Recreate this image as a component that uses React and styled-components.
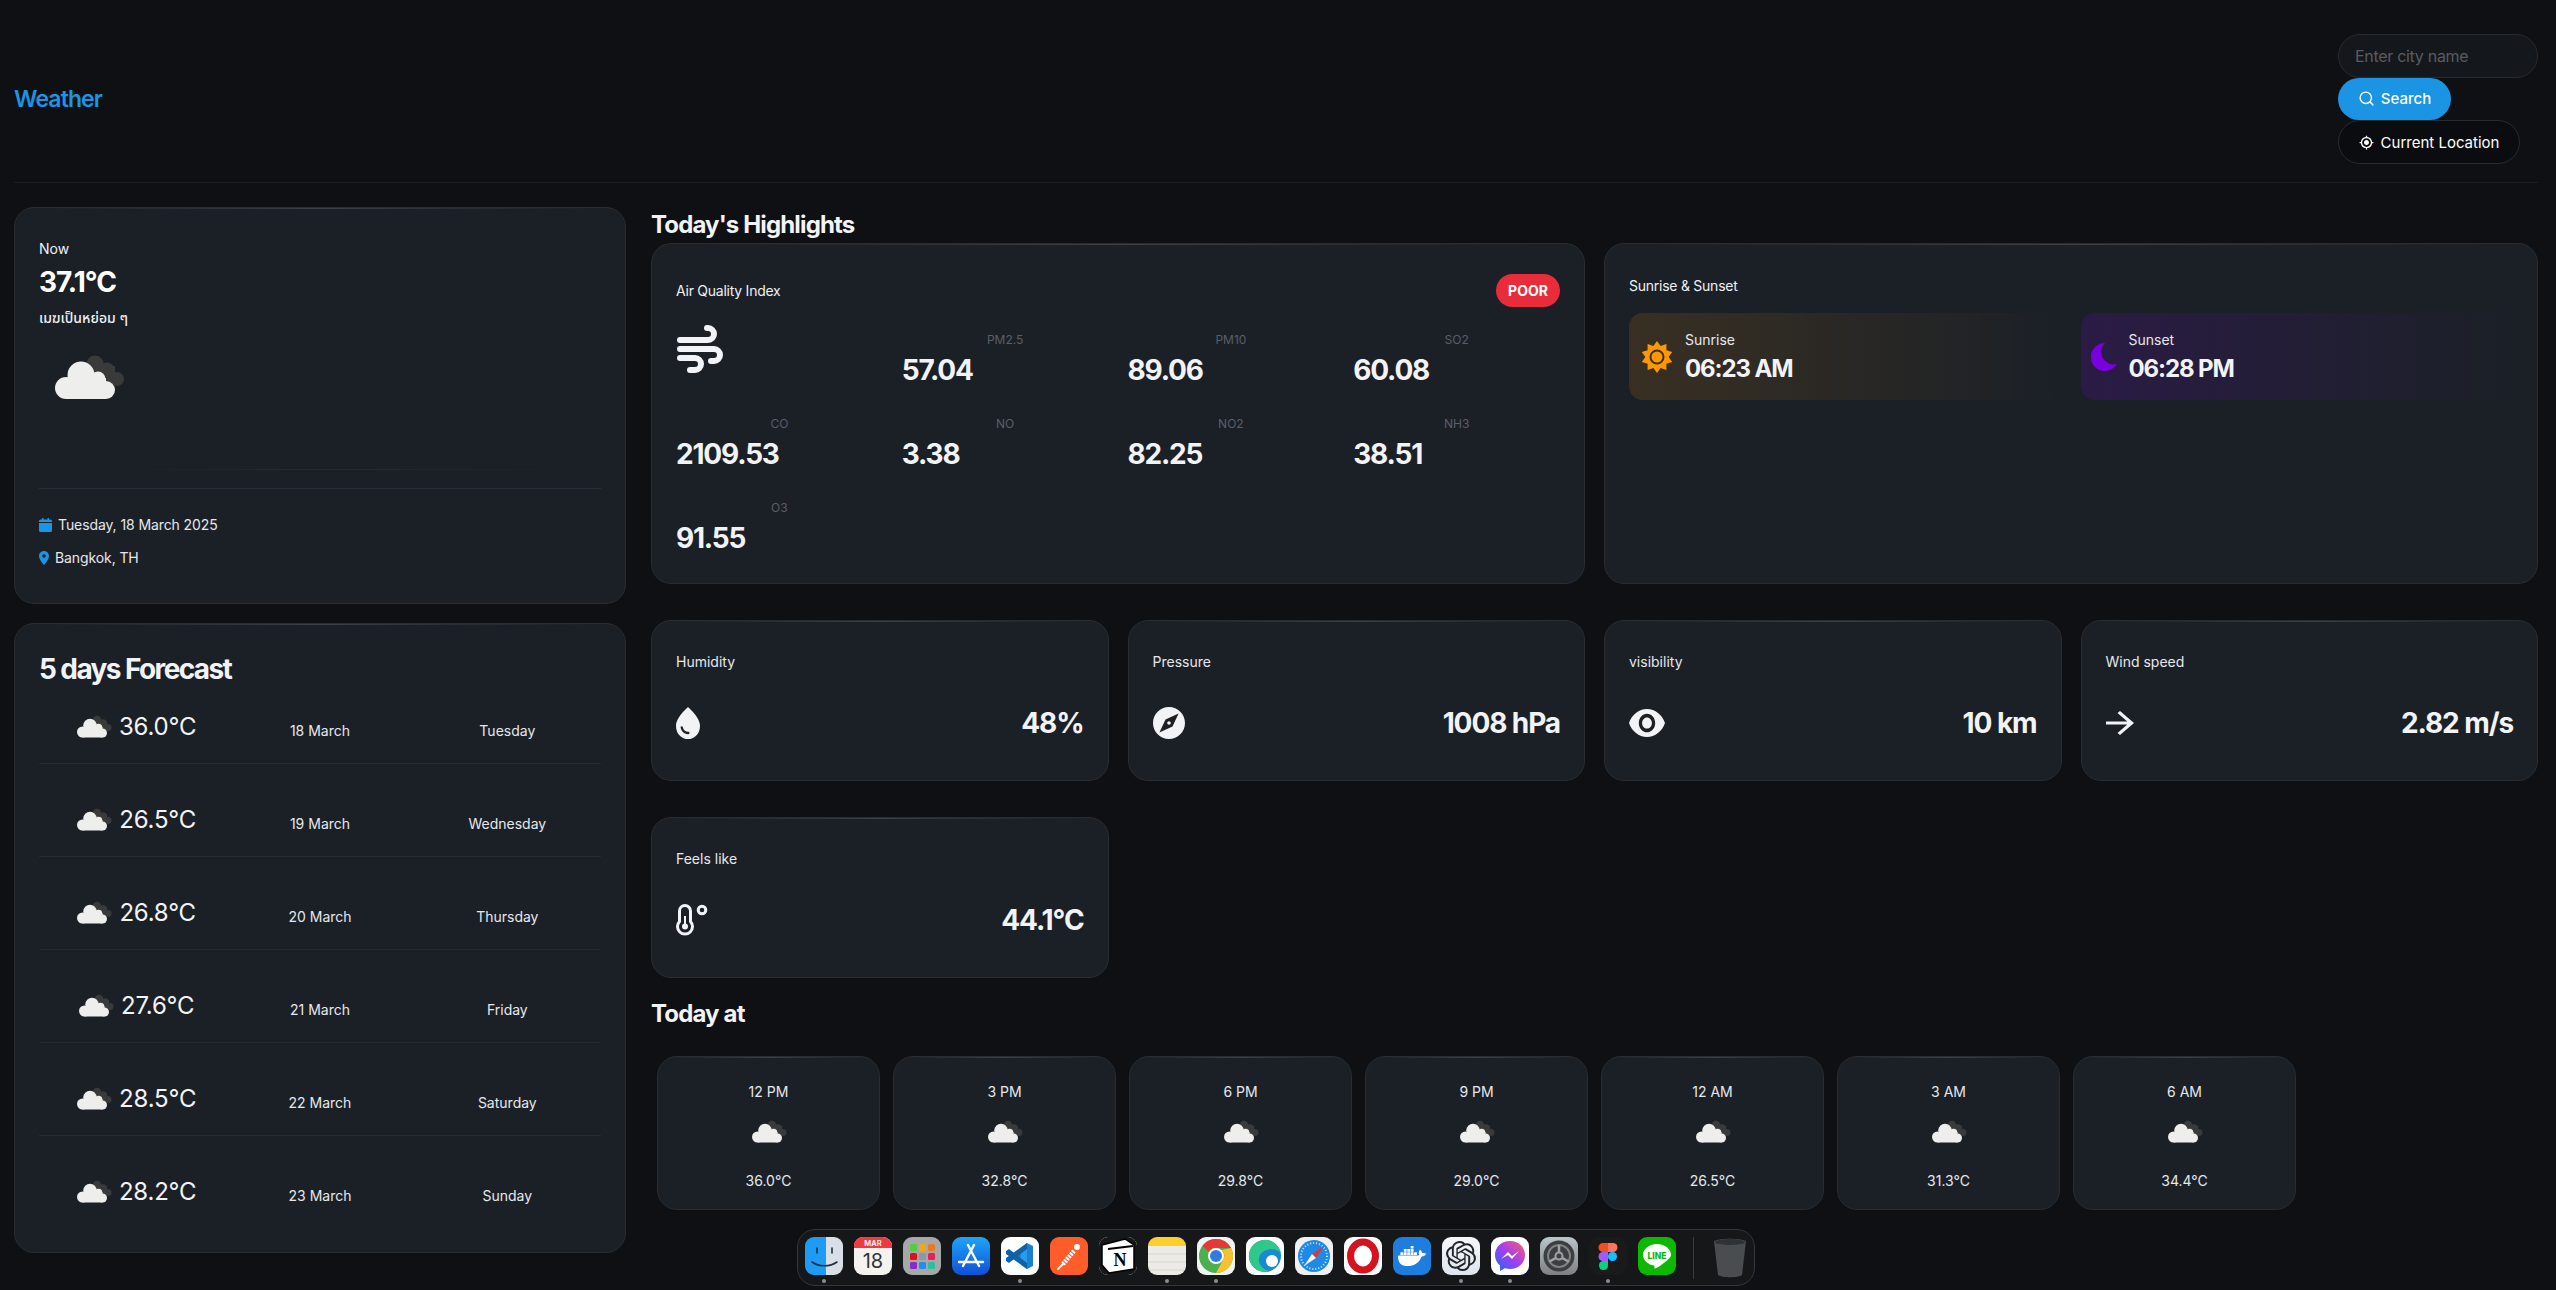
import React from "react";
import styled, { createGlobalStyle } from "styled-components";
import { Search } from "lucide-react";
import { MdWaterDrop, MdExplore, MdVisibility, MdArrowForward, MdLocationOn, MdMyLocation } from "react-icons/md";
import { SiDocker, SiOpenai } from "react-icons/si";

const GlobalStyle = createGlobalStyle`
  html, body { margin: 0; padding: 0; background: #0e1014; }
  body { font-family: Inter, "Noto Sans", sans-serif; color: #eef0f4; overflow: hidden; }
  * { box-sizing: border-box; }
`;

const Page = styled.div`
  width: 2556px;
  height: 1290px;
  padding: 0 18px 0 14px;
  background: #0e1014;
`;

const Header = styled.header`
  height: 183px;
  padding-top: 34px;
  display: flex;
  justify-content: space-between;
  align-items: flex-start;
  border-bottom: 1px solid #1b1e23;
`;

const Logo = styled.div`
  margin-top: 50px;
  font-size: 23px;
  line-height: 30px;
  font-weight: 600;
  letter-spacing: -0.9px;
  color: #1b94e4;
`;

const Actions = styled.div`
  width: 200px;
  display: flex;
  flex-direction: column;
  align-items: flex-start;
`;

const CityInput = styled.input`
  width: 200px;
  height: 44px;
  padding: 0 16px;
  border-radius: 22px;
  border: 1px solid #272b31;
  background: #14171b;
  font: 400 16px Inter, sans-serif;
  letter-spacing: -0.3px;
  color: #fff;
  &::placeholder { color: #5a5c60; }
`;

const SearchButton = styled.button`
  height: 42px;
  width: 113px;
  padding-bottom: 2px;
  border: 0;
  border-radius: 21px;
  background: #1b94e4;
  color: #fff;
  font: 500 15px Inter, sans-serif;
  display: flex;
  align-items: center;
  justify-content: center;
  gap: 6px;
`;

const LocationButton = styled.button`
  height: 44px;
  width: 182px;
  padding-bottom: 1px;
  border: 1px solid #272b31;
  border-radius: 22px;
  background: #0b0c0f;
  color: #fff;
  font: 400 15px Inter, sans-serif;
  display: flex;
  align-items: center;
  justify-content: center;
  gap: 7px;
  svg { width: 15px; height: 15px; }
`;

const Main = styled.main`
  margin-top: 24px;
  display: grid;
  grid-template-columns: 612px 1fr;
  column-gap: 25px;
`;

const LeftColumn = styled.div`
  display: flex;
  flex-direction: column;
  gap: 19px;
`;

const RightColumn = styled.div`
  display: flex;
  flex-direction: column;
`;

const Card = styled.section`
  border: 1px solid #282d34;
  border-radius: ${(p) => p.$radius || 20}px;
  background:
    linear-gradient(90deg, transparent 5%, #3a3f48 50%, transparent 95%) top / 100% 1px no-repeat,
    #1b2027;
`;

const NowCard = styled(Card)`
  height: 397px;
  padding: 30px 24px 0;
`;

const SmallText = styled.div`
  font-size: 14px;
  line-height: 22px;
  color: #eef0f4;
`;

const BigTemp = styled.div`
  margin-top: 4px;
  font-size: 28px;
  line-height: 36px;
  font-weight: 700;
  letter-spacing: -1px;
  color: #fff;
`;

const ThaiText = styled.div`
  margin-top: 8px;
  font-family: Inter, "Noto Sans Thai", "Noto Sans", sans-serif;
  font-size: 14px;
  line-height: 20px;
  font-weight: 500;
`;

const FadeLine = styled.div`
  margin-top: 41px;
  height: 1px;
  background: linear-gradient(90deg, transparent 15%, #262b32 50%, transparent 95%);
`;

const Divider = styled.div`
  margin-top: 18px;
  height: 1px;
  background: #2a2f37;
`;

const MetaRow = styled.div`
  margin-top: ${(p) => p.$top}px;
  display: flex;
  align-items: center;
  gap: ${(p) => p.$gap}px;
  font-size: 14px;
  line-height: 22px;
  letter-spacing: -0.1px;
  color: #e6e8ec;
`;

const ForecastCard = styled(Card)`
  height: 630px;
  padding: 28px 24px 0;
`;

const CardTitle = styled.h2`
  margin: 0;
  font-size: 28px;
  line-height: 34px;
  font-weight: 700;
  letter-spacing: -1.6px;
  color: #f2f3f6;
`;

const ForecastList = styled.div`
  display: flex;
  flex-direction: column;
  gap: 15px;
`;

const ForecastRow = styled.div`
  height: 78px;
  padding-top: 10px;
  display: grid;
  grid-template-columns: repeat(3, 1fr);
  align-items: center;
  justify-items: center;
  font-size: 14px;
  color: #e6e8ec;
  border-bottom: 1px solid ${(p) => (p.$last ? "transparent" : "#262b32")};
`;

const ForecastTemp = styled.div`
  display: flex;
  align-items: center;
  margin-bottom: 6px;
  font-size: 24px;
  letter-spacing: -0.2px;
  color: #f2f3f6;
`;

const ForecastCell = styled.div`
  padding-top: 1px;
`;

const CloudBox = styled.svg`
  display: block;
  width: ${(p) => p.$size}px;
  height: ${(p) => p.$size}px;
  flex: none;
`;

const SectionTitle = styled.h2`
  margin: ${(p) => p.$top || 0}px 0 0;
  height: ${(p) => p.$height}px;
  font-size: 24px;
  line-height: 36px;
  font-weight: 700;
  letter-spacing: -0.85px;
  color: #f2f3f6;
`;

const TopGrid = styled.div`
  display: grid;
  grid-template-columns: repeat(2, 1fr);
  column-gap: 19px;
`;

const AirCard = styled(Card)`
  height: 341px;
  padding: 30px 24px 0 24px;
`;

const SunCard = styled(Card)`
  height: 341px;
  padding: 30px 24px 0;
`;

const CardHead = styled.div`
  display: flex;
  justify-content: space-between;
  align-items: center;
  height: ${(p) => p.$height}px;
  font-size: 14px;
  letter-spacing: -0.25px;
  color: #eef0f4;
`;

const PoorBadge = styled.span`
  height: 33px;
  width: 64px;
  border-radius: 17px;
  background: #e92c3a;
  color: #fff;
  font-size: 14px;
  font-weight: 700;
  letter-spacing: 0;
  display: flex;
  align-items: center;
  justify-content: center;
`;

const AirGrid = styled.div`
  margin-top: 18px;
  display: grid;
  grid-template-columns: repeat(4, 1fr);
  column-gap: 19px;
  row-gap: 21px;
`;

const AirItem = styled.div`
  height: 63px;
  padding-top: 6px;
`;

const AirLabel = styled.div`
  font-size: 12px;
  line-height: 18px;
  text-align: center;
  color: #5a5e68;
`;

const AirValue = styled.div`
  margin-top: 3px;
  font-size: 28px;
  line-height: 36px;
  font-weight: 700;
  letter-spacing: -1.2px;
  color: #f2f3f6;
`;

const SunRow = styled.div`
  margin-top: 17px;
  display: grid;
  grid-template-columns: repeat(2, 1fr);
  column-gap: 19px;
`;

const SunPanel = styled.div`
  height: 87px;
  padding-left: ${(p) => p.$pad}px;
  border-radius: 14px;
  display: flex;
  align-items: center;
  gap: 12px;
  background: linear-gradient(90deg, ${(p) => p.$tint}, transparent);
`;

const SunLabel = styled.div`
  font-size: 14px;
  line-height: 20px;
  color: #e6e8ec;
`;

const SunTime = styled.div`
  margin-top: 4px;
  font-size: 24px;
  line-height: 30px;
  font-weight: 700;
  letter-spacing: -1.1px;
  color: #f2f3f6;
`;

const StatGrid = styled.div`
  margin-top: 36px;
  display: grid;
  grid-template-columns: repeat(4, 1fr);
  column-gap: 19px;
  row-gap: 36px;
`;

const StatCard = styled(Card)`
  height: 161px;
  padding: 30px 24px 0 24px;
`;

const StatLabel = styled.div`
  font-size: 14px;
  line-height: 22px;
  color: #e6e8ec;
`;

const StatRow = styled.div`
  margin-top: 34px;
  height: 32px;
  display: flex;
  align-items: center;
  justify-content: space-between;
`;

const StatGlyph = styled.span`
  display: block;
  color: ${(p) => p.$color || "#f2f3f6"};
  svg {
    display: block;
    width: ${(p) => p.$w}px;
    height: ${(p) => p.$h || 32}px;
  }
`;

const StatValue = styled.div`
  font-size: 28px;
  font-weight: 700;
  letter-spacing: -1.1px;
  color: #f2f3f6;
`;

const HourRow = styled.div`
  padding-left: 6px;
  display: flex;
  gap: 13px;
`;

const HourCard = styled(Card)`
  width: 223px;
  height: 154px;
  padding-top: 24px;
  display: flex;
  flex-direction: column;
  align-items: center;
  font-size: 14px;
  line-height: 22px;
  color: #e6e8ec;
`;

const HourIcon = styled.div`
  margin-top: 4px;
`;

const HourTemp = styled.div`
  margin-top: 13px;
`;

const Dock = styled.nav`
  position: fixed;
  left: 797px;
  top: 1229px;
  width: 958px;
  height: 57px;
  padding: 7px 0 0 7px;
  display: flex;
  gap: 11px;
  border: 1px solid #34363a;
  border-radius: 18px;
  background: #161719;
`;

const DockSlot = styled.div`
  width: 38px;
  display: flex;
  flex-direction: column;
  align-items: center;
  gap: 4px;
`;

const DockTile = styled.div`
  width: 38px;
  height: 38px;
  border-radius: 9px;
  overflow: hidden;
  display: flex;
  align-items: center;
  justify-content: center;
  background: ${(p) => p.$bg};
  color: ${(p) => p.$fg || "#fff"};
  svg { display: block; }
`;

const DockDot = styled.span`
  width: 4px;
  height: 4px;
  border-radius: 50%;
  background: ${(p) => (p.$on ? "#8a8c90" : "transparent")};
`;

const DockSep = styled.div`
  width: 1px;
  height: 42px;
  margin: 0 7px 0 6px;
  background: #3a3c40;
`;

const Cloud = ({ size }) => (
  <CloudBox $size={size} viewBox="0 0 100 100">
    <g fill="#3a3a3a">
      <circle cx="56" cy="36" r="8.5" />
      <circle cx="68" cy="42" r="7.5" />
      <circle cx="78" cy="51" r="7" />
      <rect x="56" y="38" width="20" height="18" />
    </g>
    <g fill="#eeeeec">
      <circle cx="27" cy="60" r="11" />
      <circle cx="42" cy="47" r="13.5" />
      <circle cx="59" cy="51" r="7.5" />
      <circle cx="67" cy="62" r="9" />
      <rect x="27" y="50" width="40" height="21" />
    </g>
  </CloudBox>
);

const starPoints = Array.from({ length: 20 }, (_, i) => {
  const r = i % 2 ? 11.6 : 16;
  const a = (Math.PI * i) / 10 - Math.PI / 2;
  return `${16 + r * Math.cos(a)},${16 + r * Math.sin(a)}`;
}).join(" ");

const SunIcon = () => (
  <svg width="32" height="32" viewBox="0 0 32 32">
    <polygon points={starPoints} fill="#ff9800" />
    <circle cx="16" cy="16" r="6.5" fill="none" stroke="#33302b" strokeWidth="2" />
  </svg>
);

const MoonIcon = () => (
  <svg width="26" height="28" viewBox="0 0 26 28">
    <path d="M14 0A14 14 0 1 0 26 21 12.500 12.500 0 0 1 14 0Z" fill="#7a00e0" />
  </svg>
);

const AirIcon = () => (
  <svg width="48" height="48" viewBox="0 0 48 48" fill="none" stroke="#f2f3f6" strokeWidth="6" strokeLinecap="round">
    <path d="M4 15H32a6 6 0 0 0 0-12h-1" />
    <path d="M4 24H38a6 6 0 0 1 0 12h-3" />
    <path d="M4 33H19a6 6 0 0 1 0 12h-5" />
  </svg>
);

const ThermoIcon = () => (
  <svg viewBox="0 0 32 32" fill="none" stroke="#f2f3f6" strokeWidth="3">
    <path d="M3.500 7a5.500 5.500 0 0 1 11 0v10.500a7.500 7.500 0 1 1-11 0Z" />
    <circle cx="9" cy="22.500" r="3" fill="#f2f3f6" stroke="none" />
    <path d="M9 12v10" strokeWidth="2" />
    <circle cx="26" cy="6" r="3.800" />
  </svg>
);

const CalendarIcon = () => (
  <svg width="13" height="14" viewBox="0 0 13 14">
    <path d="M1.500 1.500H3V0h1.500v1.500h4V0H10v1.500h1.500A1.500 1.500 0 0 1 13 3v1H0V3a1.500 1.500 0 0 1 1.500-1.500Z" fill="#1b94e4" />
    <path d="M0 5h13v7.500a1.500 1.500 0 0 1-1.500 1.500h-10A1.500 1.500 0 0 1 0 12.500Z" fill="#1b94e4" />
  </svg>
);

const dockIcons = [
  {
    key: "finder", bg: "linear-gradient(90deg,#1e9cf5 0 55%,#d8dfe6 55%)", dot: true, art: (
      <svg width="38" height="38" viewBox="0 0 38 38" fill="none" stroke="#23313f" strokeWidth="1.600" strokeLinecap="round">
        <path d="M12 11v5M27 11v5M7 25c7 5 18 5 25 0" />
      </svg>
    ),
  },
  {
    key: "calendar", bg: "#f5f3f0", art: (
      <svg width="38" height="38" viewBox="0 0 38 38">
        <rect width="38" height="11" fill="#ee3b3f" />
        <text x="19" y="8.500" textAnchor="middle" fontSize="7.500" fontWeight="600" fill="#fff" fontFamily="Inter">MAR</text>
        <text x="19" y="31" textAnchor="middle" fontSize="20" fill="#333" fontFamily="Inter">18</text>
      </svg>
    ),
  },
  {
    key: "launchpad", bg: "#a6a7a9", art: (
      <svg width="38" height="38" viewBox="0 0 38 38">
        {["#4fd13f", "#f2a71b", "#ec7a1c", "#d9141f", "#8f979d", "#e81f5a", "#8a2bc4", "#1e8ff0", "#29c0a0"].map((c, i) => (
          <rect key={c} x={7 + (i % 3) * 9} y={7 + Math.floor(i / 3) * 9} width="7" height="7" rx="1.500" fill={c} />
        ))}
      </svg>
    ),
  },
  {
    key: "appstore", bg: "linear-gradient(#1ea5f8,#1150d8)", art: (
      <svg width="38" height="38" viewBox="0 0 38 38" fill="none" stroke="#fff" strokeWidth="2.400" strokeLinecap="round">
        <path d="M22 8 11 29M16 8l11 21M7 25h24" />
      </svg>
    ),
  },
  {
    key: "vscode", bg: "#fff", dot: true, art: (
      <svg width="38" height="38" viewBox="0 0 38 38">
        <path d="M26 6 32 9V29L26 32 12 20Z" fill="#1b80d0" />
        <path d="M26 6V32L20 28V11Z" fill="#2a9cec" />
        <path d="M5 14 8 12 26 26V32L5 17Z" fill="#0f62a8" />
        <path d="M5 24 8 26 26 12V6L5 21Z" fill="#0f62a8" />
      </svg>
    ),
  },
  {
    key: "postman", bg: "#ff5c2b", art: (
      <svg width="38" height="38" viewBox="0 0 38 38" fill="none" stroke="#fff" strokeWidth="2" strokeLinecap="round">
        <path d="M13 27 24 14" strokeWidth="4.500" strokeDasharray="2 1" strokeLinecap="butt" />
        <path d="M8 32 13 27" />
        <circle cx="27" cy="10" r="3" fill="#fff" stroke="none" />
      </svg>
    ),
  },
  {
    key: "notion", bg: "#fff", fg: "#000", art: (
      <svg width="38" height="38" viewBox="0 0 38 38">
        <rect width="38" height="38" fill="#161719" />
        <path d="M3 8 26 2 35 8V32L10 36 3 28Z" fill="#fff" stroke="#000" strokeWidth="1.500" />
        <path d="M9 12 34 9" stroke="#000" strokeWidth="2" />
        <text x="21" y="29" textAnchor="middle" fontSize="18" fontWeight="700" fill="#000" fontFamily="Liberation Serif">N</text>
      </svg>
    ),
  },
  {
    key: "notes", bg: "linear-gradient(#fdcf2c 0 24%,#ecebe6 24%)", dot: true, art: (
      <svg width="38" height="38" viewBox="0 0 38 38" stroke="#d8d6cf" strokeWidth="1">
        <path d="M0 17h38M0 25h38M0 33h38" />
      </svg>
    ),
  },
  {
    key: "chrome", bg: "#f2f2f2", dot: true, art: (
      <svg width="38" height="38" viewBox="0 0 38 38">
        <circle cx="19" cy="19" r="17" fill="#4caf50" />
        <path d="M19 2A17 17 0 0 1 34 11H19A8 8 0 0 0 12 15L5.500 9A17 17 0 0 1 19 2Z" fill="#e53935" />
        <path d="M34 11A17 17 0 0 1 19 36L26 23A8 8 0 0 0 25 13Z" fill="#fbc02d" />
        <circle cx="19" cy="19" r="8" fill="#fff" />
        <circle cx="19" cy="19" r="6" fill="#2f7de1" />
      </svg>
    ),
  },
  {
    key: "edge", bg: "#fff", art: (
      <svg width="38" height="38" viewBox="0 0 38 38">
        <circle cx="19" cy="19" r="16" fill="#1a8ad0" />
        <path d="M3 21A16 16 0 0 1 35 17C34 12 20 9 14 18 11 24 14 32 24 34A16 16 0 0 1 3 21Z" fill="#2fc88a" />
        <circle cx="26" cy="24" r="6" fill="#fff" />
      </svg>
    ),
  },
  {
    key: "safari", bg: "#f0f0f0", art: (
      <svg width="38" height="38" viewBox="0 0 38 38">
        <circle cx="19" cy="19" r="16" fill="#1e8ae6" />
        <circle cx="19" cy="19" r="13" fill="none" stroke="#cfe6fa" strokeWidth="2" strokeDasharray="1 2" />
        <path d="M29 9 21 21 17 17Z" fill="#e8342b" />
        <path d="M9 29 21 21 17 17Z" fill="#f4f4f4" />
      </svg>
    ),
  },
  {
    key: "opera", bg: "#fff", art: (
      <svg width="38" height="38" viewBox="0 0 38 38">
        <ellipse cx="19" cy="19" rx="12.500" ry="14" fill="none" stroke="#d6121f" strokeWidth="7" />
      </svg>
    ),
  },
  { key: "docker", bg: "#1d7ee0", art: <SiDocker size={28} /> },
  { key: "chatgpt", bg: "linear-gradient(#f6f7f9,#dfe5ee)", fg: "#22262b", dot: true, art: <SiOpenai size={30} /> },
  {
    key: "messenger", bg: "#fff", dot: true, art: (
      <svg width="38" height="38" viewBox="0 0 38 38">
        <defs>
          <linearGradient id="msgr" x1="0" y1="1" x2="1" y2="0">
            <stop offset="0" stopColor="#1e6bf5" />
            <stop offset="0.500" stopColor="#a23ff0" />
            <stop offset="1" stopColor="#ff5a70" />
          </linearGradient>
        </defs>
        <path d="M19 4C10.500 4 4 10 4 18c0 4.500 2 8 5 10.500V34l5-2.800c1.500.4 3.200.8 5 .8 8.500 0 15-6 15-14S27.500 4 19 4Z" fill="url(#msgr)" />
        <path d="M10 22 17 15 21 19 28 14 21 22 17 18Z" fill="#fff" />
      </svg>
    ),
  },
  {
    key: "settings", bg: "linear-gradient(#b9c6ca,#7d8083)", art: (
      <svg width="38" height="38" viewBox="0 0 38 38" fill="none">
        <circle cx="19" cy="19" r="15.500" fill="#3d3e40" />
        <circle cx="19" cy="19" r="11" stroke="#808184" strokeWidth="2" />
        <circle cx="19" cy="19" r="3.500" stroke="#a0a1a4" strokeWidth="2" />
        <path d="M19 8v7.500M9.500 24.500l6.500-3.700M28.500 24.500 22 20.800" stroke="#a0a1a4" strokeWidth="2.500" />
      </svg>
    ),
  },
  {
    key: "figma", bg: "#1a1a1a", dot: true, art: (
      <svg width="38" height="38" viewBox="0 0 38 38">
        <path d="M19 6h-5a4.500 4.500 0 0 0 0 9h5Z" fill="#f24e1e" />
        <path d="M19 6h5a4.500 4.500 0 0 1 0 9h-5Z" fill="#ff7262" />
        <path d="M19 15h-5a4.500 4.500 0 0 0 0 9h5Z" fill="#a259ff" />
        <circle cx="23.500" cy="19.500" r="4.500" fill="#1abcfe" />
        <path d="M14 24h5v4.500a4.500 4.500 0 1 1-5-4.500Z" fill="#0acf83" />
      </svg>
    ),
  },
  {
    key: "line", bg: "#0cb800", art: (
      <svg width="38" height="38" viewBox="0 0 38 38">
        <path d="M19 7C11 7 5 12 5 18c0 5 4.500 9.500 11 10.500.8.200 0 3 1 3 1.500 0 9-5 13-9 2-2 3-3 3-4.500 0-6-6-11-14-11Z" fill="#fff" />
        <text x="19" y="21.500" textAnchor="middle" fontSize="8.500" fontWeight="800" fill="#0cb800" fontFamily="Inter">LINE</text>
      </svg>
    ),
  },
];

const airRows = [
  ["PM2.5", "57.04"], ["PM10", "89.06"], ["SO2", "60.08"],
  ["CO", "2109.53"], ["NO", "3.38"], ["NO2", "82.25"], ["NH3", "38.51"], ["O3", "91.55"],
];

const forecast = [
  ["36.0°C", "18 March", "Tuesday"],
  ["26.5°C", "19 March", "Wednesday"],
  ["26.8°C", "20 March", "Thursday"],
  ["27.6°C", "21 March", "Friday"],
  ["28.5°C", "22 March", "Saturday"],
  ["28.2°C", "23 March", "Sunday"],
];

const hours = [
  ["12 PM", "36.0°C"], ["3 PM", "32.8°C"], ["6 PM", "29.8°C"], ["9 PM", "29.0°C"],
  ["12 AM", "26.5°C"], ["3 AM", "31.3°C"], ["6 AM", "34.4°C"],
];

const stats = [
  ["Humidity", <MdWaterDrop viewBox="4 2 16 20" preserveAspectRatio="none" />, 24, 32, "48%"],
  ["Pressure", <MdExplore viewBox="2 2 20 20" preserveAspectRatio="none" />, 32, 32, "1008 hPa"],
  ["visibility", <MdVisibility viewBox="1 4.500 22 15" preserveAspectRatio="none" />, 36, 28, "10 km"],
  ["Wind speed", <MdArrowForward viewBox="4 4 16 16" preserveAspectRatio="none" />, 28, 24, "2.82 m/s"],
  ["Feels like", <ThermoIcon />, 32, 32, "44.1°C"],
];

export default function App() {
  return (
    <Page>
      <GlobalStyle />
      <Header>
        <Logo>Weather</Logo>
        <Actions>
          <CityInput placeholder="Enter city name" />
          <SearchButton><Search size={17} />Search</SearchButton>
          <LocationButton><MdMyLocation />Current Location</LocationButton>
        </Actions>
      </Header>

      <Main>
        <LeftColumn>
          <NowCard>
            <SmallText>Now</SmallText>
            <BigTemp>37.1°C</BigTemp>
            <ThaiText>เมฆเป็นหย่อม ๆ</ThaiText>
            <Cloud size={100} />
            <FadeLine />
            <Divider />
            <MetaRow $top={25} $gap={6}><CalendarIcon />Tuesday, 18 March 2025</MetaRow>
            <MetaRow $top={11} $gap={6}>
              <StatGlyph $w={10} $h={14} $color="#1b94e4"><MdLocationOn viewBox="5 2 14 20" preserveAspectRatio="none" /></StatGlyph>
              Bangkok, TH
            </MetaRow>
          </NowCard>

          <ForecastCard>
            <CardTitle>5 days Forecast</CardTitle>
            <ForecastList>
              {forecast.map(([temp, date, day], i) => (
                <ForecastRow key={date} $last={i === forecast.length - 1}>
                  <ForecastTemp><Cloud size={50} />{temp}</ForecastTemp>
                  <ForecastCell>{date}</ForecastCell>
                  <ForecastCell>{day}</ForecastCell>
                </ForecastRow>
              ))}
            </ForecastList>
          </ForecastCard>
        </LeftColumn>

        <RightColumn>
          <SectionTitle $height={36}>Today's Highlights</SectionTitle>
          <TopGrid>
            <AirCard>
              <CardHead $height={33}>Air Quality Index<PoorBadge>POOR</PoorBadge></CardHead>
              <AirGrid>
                <AirIcon />
                {airRows.map(([label, value]) => (
                  <AirItem key={label}>
                    <AirLabel>{label}</AirLabel>
                    <AirValue>{value}</AirValue>
                  </AirItem>
                ))}
              </AirGrid>
            </AirCard>
            <SunCard>
              <CardHead $height={22}>Sunrise &amp; Sunset</CardHead>
              <SunRow>
                <SunPanel $pad={12} $tint="rgba(255,152,0,0.13)">
                  <SunIcon />
                  <div><SunLabel>Sunrise</SunLabel><SunTime>06:23 AM</SunTime></div>
                </SunPanel>
                <SunPanel $pad={10} $tint="rgba(122,0,224,0.16)">
                  <MoonIcon />
                  <div><SunLabel>Sunset</SunLabel><SunTime>06:28 PM</SunTime></div>
                </SunPanel>
              </SunRow>
            </SunCard>
          </TopGrid>

          <StatGrid>
            {stats.map(([label, icon, w, h, value]) => (
              <StatCard key={label}>
                <StatLabel>{label}</StatLabel>
                <StatRow>
                  <StatGlyph $w={w} $h={h}>{icon}</StatGlyph>
                  <StatValue>{value}</StatValue>
                </StatRow>
              </StatCard>
            ))}
          </StatGrid>

          <SectionTitle $height={60} $top={18}>Today at</SectionTitle>
          <HourRow>
            {hours.map(([time, temp]) => (
              <HourCard key={time}>
                {time}
                <HourIcon><Cloud size={50} /></HourIcon>
                <HourTemp>{temp}</HourTemp>
              </HourCard>
            ))}
          </HourRow>
        </RightColumn>
      </Main>

      <Dock>
        {dockIcons.map((d) => (
          <DockSlot key={d.key}>
            <DockTile $bg={d.bg} $fg={d.fg}>{d.art}</DockTile>
            <DockDot $on={d.dot} />
          </DockSlot>
        ))}
        <DockSep />
        <svg width="36" height="42" viewBox="0 0 36 42">
          <path d="M2 4C8 1 28 1 34 4L30 38C26 41 10 41 6 38Z" fill="#4a4d50" />
          <ellipse cx="18" cy="5" rx="15" ry="3" fill="#2f3234" />
        </svg>
      </Dock>
    </Page>
  );
}
